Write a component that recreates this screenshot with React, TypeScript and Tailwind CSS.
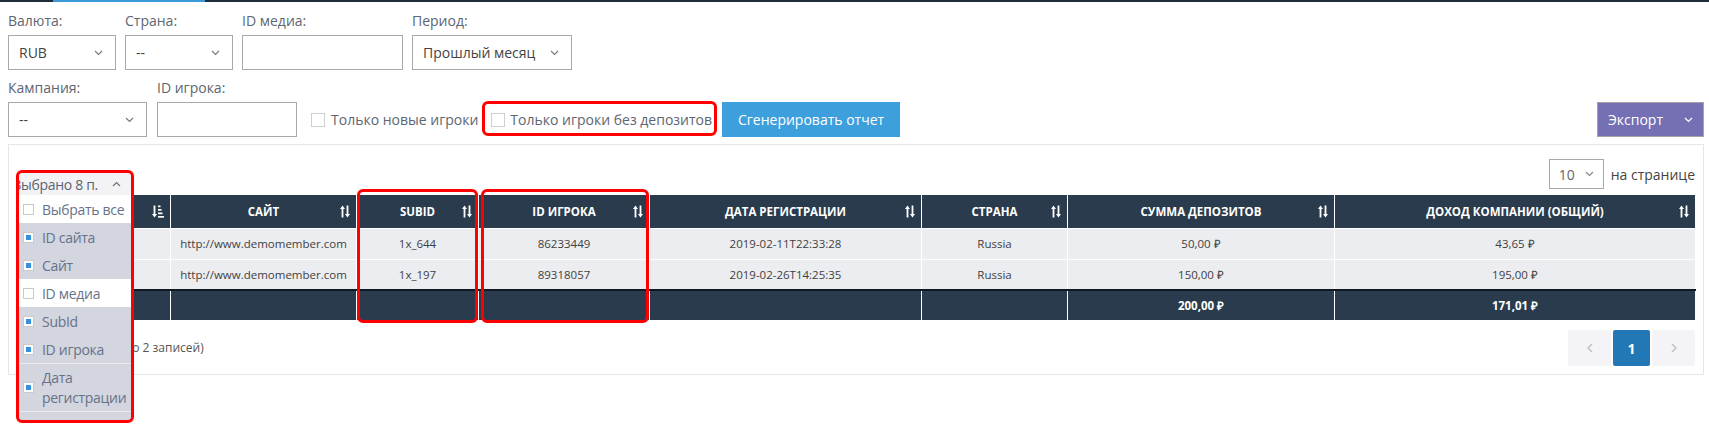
import React from 'react';

const Chevron = ({ className = '', up = false }: { className?: string; up?: boolean }) => (
  <svg width="9" height="6" viewBox="0 0 9 6" fill="none" stroke="currentColor" strokeWidth="1.2" className={className}>
    <polyline points={up ? '1,5 4.5,1.5 8,5' : '1,1 4.5,4.5 8,1'} />
  </svg>
);

const ChevronSide = ({ left = false }: { left?: boolean }) => (
  <svg width="6" height="10" viewBox="0 0 6 10" fill="none" stroke="#b9bcc4" strokeWidth="1.2">
    <polyline points={left ? '5,1 1,5 5,9' : '1,1 5,5 1,9'} />
  </svg>
);

const SortIcon = () => (
  <svg width="10" height="13" viewBox="0 0 10 13" fill="white">
    <path d="M2.5 0.5 L5 4 H3.4 V12.5 H1.6 V4 H0 Z" />
    <path d="M7.5 12.5 L5 9 H6.6 V0.5 H8.4 V9 H10 Z" />
  </svg>
);

const SortAmountIcon = () => (
  <svg width="12" height="13" viewBox="0 0 12 13" fill="white">
    <path d="M2.5 12.5 L0 9 H1.6 V0.5 H3.4 V9 H5 Z" />
    <rect x="6" y="0.5" width="2.5" height="1.7" />
    <rect x="6" y="4" width="3.5" height="1.7" />
    <rect x="6" y="7.5" width="4.5" height="1.7" />
    <rect x="6" y="11" width="6" height="1.7" />
  </svg>
);

const Field = ({ label, children }: { label: string; children: React.ReactNode }) => (
  <div className="flex flex-col gap-[4px]">
    <span className="text-[14px] leading-[20px] text-[#5d6671]">{label}</span>
    {children}
  </div>
);

const Select = ({ value, width }: { value: string; width: string }) => (
  <div className={`${width} h-[35px] border border-[#a9a9a9] flex items-center justify-between pl-[10px] pr-[12px] text-[14px] text-[#444]`}>
    <span>{value}</span>
    <Chevron className="text-[#7a7a7a]" />
  </div>
);

const Input = ({ width }: { width: string }) => (
  <div className={`${width} h-[35px] border border-[#a9a9a9] bg-white`} />
);

const Box = ({ checked = false }: { checked?: boolean }) => (
  <span className="w-[11px] h-[11px] shrink-0 border border-[#c9c9cf] bg-white flex items-center justify-center">
    {checked && <span className="w-[5px] h-[5px] bg-[#3592d8]" />}
  </span>
);

// first column sits under the column picker, so its texts are left out
const columns = [
  { title: '', w: 'w-[152px]', icon: 'amount' },
  { title: 'Сайт', w: 'w-[186px]', icon: 'sort' },
  { title: 'SubId', w: 'w-[122px]', icon: 'sort' },
  { title: 'ID игрока', w: 'w-[171px]', icon: 'sort' },
  { title: 'Дата регистрации', w: 'w-[272px]', icon: 'sort' },
  { title: 'Страна', w: 'w-[146px]', icon: 'sort' },
  { title: 'Сумма депозитов', w: 'w-[267px]', icon: 'sort' },
  { title: 'Доход компании (общий)', w: 'w-[361px]', icon: 'sort' },
];

const rows = [
  ['', 'http://www.demomember.com', '1x_644', '86233449', '2019-02-11T22:33:28', 'Russia', '50,00 ₽', '43,65 ₽'],
  ['', 'http://www.demomember.com', '1x_197', '89318057', '2019-02-26T14:25:35', 'Russia', '150,00 ₽', '195,00 ₽'],
];

const footer = ['', '', '', '', '', '', '200,00 ₽', '171,01 ₽'];

const options = [
  { label: 'Выбрать все', checked: false },
  { label: 'ID сайта', checked: true },
  { label: 'Сайт', checked: true },
  { label: 'ID медиа', checked: false },
  { label: 'SubId', checked: true },
  { label: 'ID игрока', checked: true },
];

export default function App() {
  return (
    <div className="relative w-[1709px] h-[440px] font-['Open_Sans',sans-serif] bg-white">
      <div className="flex h-[2px]">
        <div className="w-[53px] bg-[#1f2c3a]" />
        <div className="w-[152px] bg-[#3a9ad9]" />
        <div className="flex-1 bg-[#1f2c3a]" />
      </div>

      <div className="pl-[8px] pr-[5px] pt-[9px]">
        <div className="flex gap-[9px]">
          <Field label="Валюта:"><Select value="RUB" width="w-[108px]" /></Field>
          <Field label="Страна:"><Select value="--" width="w-[108px]" /></Field>
          <Field label="ID медиа:"><Input width="w-[161px]" /></Field>
          <Field label="Период:"><Select value="Прошлый месяц" width="w-[160px]" /></Field>
        </div>

        <div className="flex items-end mt-[8px]">
          <Field label="Кампания:"><Select value="--" width="w-[139px]" /></Field>
          <div className="ml-[10px]">
            <Field label="ID игрока:"><Input width="w-[140px]" /></Field>
          </div>
          <label className="ml-[14px] h-[35px] flex items-center gap-[6px] text-[14px] text-[#5d6671]">
            <span className="w-[14px] h-[14px] border border-[#cfcfcf] bg-white" />
            Только новые игроки
          </label>
          <label className="ml-[13px] h-[35px] flex items-center gap-[5px] text-[14px] text-[#5d6671]">
            <span className="w-[14px] h-[14px] border border-[#cfcfcf] bg-white" />
            Только игроки без депозитов
          </label>
          <button className="ml-[10px] w-[178px] h-[35px] bg-[#3d9fdc] text-white text-[14px]">
            Сгенерировать отчет
          </button>
          <button className="ml-auto w-[107px] h-[35px] bg-[#7570b3] border border-[#a3a3a8] text-white text-[14px] flex items-center justify-between pl-[10px] pr-[10px]">
            Экспорт
            <Chevron className="text-white" />
          </button>
        </div>

        <div className="mt-[7px] border border-[#e6e6e6] pl-[9px] pr-[8px] pt-[14px] pb-[8px]">
          <div className="flex justify-end items-center gap-[7px] h-[30px]">
            <div className="w-[55px] h-[30px] border border-[#a9a9a9] flex items-center justify-between pl-[9px] pr-[9px] text-[14px] text-[#666]">
              <span>10</span>
              <Chevron className="text-[#888]" />
            </div>
            <span className="text-[14px] text-[#444]">на странице</span>
          </div>

          <table className="mt-[6px] w-full table-fixed border-collapse">
            <colgroup>
              {columns.map((c, i) => <col key={i} className={c.w} />)}
            </colgroup>
            <thead>
              <tr className="bg-[#2a3b4d]">
                {columns.map((c, i) => (
                  <th key={i} className="relative h-[33px] border-x border-b border-white text-white text-[11.5px] font-bold uppercase text-center">
                    {c.title}
                    <span className="absolute right-[6px] top-[10px]">
                      {c.icon === 'amount' ? <SortAmountIcon /> : <SortIcon />}
                    </span>
                  </th>
                ))}
              </tr>
            </thead>
            <tbody>
              {rows.map((r, i) => (
                <tr key={i} className="bg-[#ecedf1]">
                  {r.map((v, j) => (
                    <td key={j} className="h-[31px] border-x border-b border-white text-center text-[11.5px] text-[#3f3f3f]">{v}</td>
                  ))}
                </tr>
              ))}
            </tbody>
            <tfoot>
              <tr className="bg-[#2a3b4d]">
                {footer.map((v, j) => (
                  <td key={j} className="h-[30px] border-x border-white border-t-2 border-t-[#111a24] text-center text-[11.5px] text-white font-bold">{v}</td>
                ))}
              </tr>
            </tfoot>
          </table>

          <div className="mt-[10px] flex items-center justify-between">
            <span className="text-[12px] text-[#555]">Показано 1 - 2 (всего 2 записей)</span>
            <div className="flex gap-[2px]">
              <div className="w-[43px] h-[36px] bg-[#f4f4f6] rounded-[2px] flex items-center justify-center"><ChevronSide left /></div>
              <div className="w-[37px] h-[36px] bg-[#2277b5] rounded-[2px] flex items-center justify-center text-white text-[14px] font-bold">1</div>
              <div className="w-[43px] h-[36px] bg-[#f4f4f6] rounded-[2px] flex items-center justify-center"><ChevronSide /></div>
            </div>
          </div>
        </div>
      </div>

      {/* column picker menu */}
      <div className="absolute left-[19px] top-[173px] w-[112px] h-[247px] overflow-hidden bg-[#d3d5df] text-[14px] tracking-[-0.3px] text-[#67728a]">
        <div className="h-[22px] bg-[#f3f3f5] flex items-center justify-end gap-[14px] pr-[10px] whitespace-nowrap overflow-hidden">
          <span className="shrink-0 text-[#5a6372]">Выбрано 8 п.</span>
          <Chevron up className="shrink-0 text-[#6b7586]" />
        </div>
        {options.map((o) => (
          <div key={o.label} className={`h-[28px] flex items-center gap-[8px] pl-[4px] whitespace-nowrap ${o.checked ? 'bg-[#d3d5df]' : 'bg-white'}`}>
            <Box checked={o.checked} />
            <span>{o.label}</span>
          </div>
        ))}
        <div className="h-[49px] flex items-center gap-[8px] pl-[4px] border-y border-[#e9eaf0] leading-[20px]">
          <Box checked />
          <span>Дата<br />регистрации</span>
        </div>
        <div className="h-[10px]" />
      </div>

      {/* annotations */}
      <div className="absolute left-[482px] top-[101px] w-[235px] h-[35px] border-[3px] border-[#ff0000] rounded-[6px]" />
      <div className="absolute left-[16px] top-[170px] w-[118px] h-[253px] border-[3px] border-[#ff0000] rounded-[6px]" />
      <div className="absolute left-[357px] top-[189px] w-[121px] h-[134px] border-[3px] border-[#ff0000] rounded-[6px]" />
      <div className="absolute left-[481px] top-[189px] w-[168px] h-[134px] border-[3px] border-[#ff0000] rounded-[6px]" />
    </div>
  );
}
